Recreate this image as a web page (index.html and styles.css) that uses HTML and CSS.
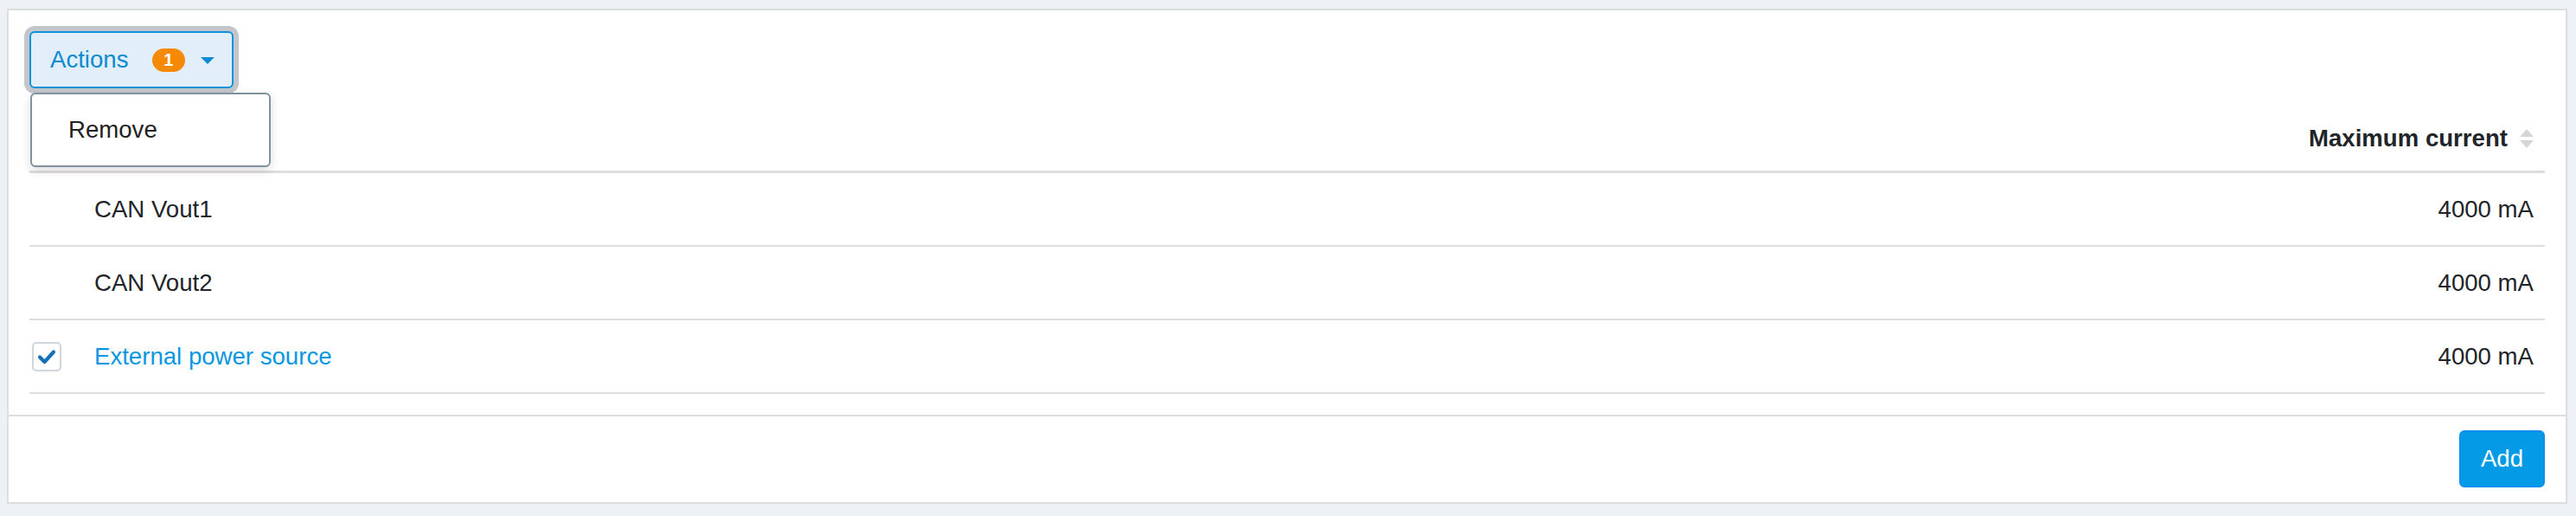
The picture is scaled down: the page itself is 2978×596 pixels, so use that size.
FILE: index.html
```html
<!DOCTYPE html>
<html>
<head>
<meta charset="utf-8">
<link rel="stylesheet" href="styles.css">
</head>
<body>
<div class="page">
  <div class="card">
    <div class="card-body">
      <div class="toolbar">
        <div class="dropdown">
          <button class="btn-actions">
            <span class="label">Actions</span>
            <span class="badge">1</span>
            <svg class="caret" width="16" height="8" viewBox="0 0 16 8"><path d="M0 0H16L8 8Z" fill="#0a8ad0"/></svg>
          </button>
          <div class="menu">
            <div class="menu-item">Remove</div>
          </div>
        </div>
      </div>
      <table class="grid">
        <thead>
          <tr>
            <th class="col-check"></th>
            <th class="col-name"></th>
            <th class="col-value">
              <span class="th-inner">Maximum current
                <svg class="sort" width="16" height="22" viewBox="0 0 16 22"><path d="M0 9H16L8 0Z" fill="#d6d6d6"/><path d="M0 13H16L8 22Z" fill="#d6d6d6"/></svg>
              </span>
            </th>
          </tr>
        </thead>
        <tbody>
          <tr>
            <td class="col-check"></td>
            <td class="col-name">CAN Vout1</td>
            <td class="col-value">4000 mA</td>
          </tr>
          <tr>
            <td class="col-check"></td>
            <td class="col-name">CAN Vout2</td>
            <td class="col-value">4000 mA</td>
          </tr>
          <tr>
            <td class="col-check">
              <span class="checkbox">
                <svg width="30" height="30" viewBox="0 0 30 30"><path d="M7 15.5L12.5 21L23 9.5" fill="none" stroke="#1470b8" stroke-width="4.2" stroke-linecap="round" stroke-linejoin="round"/></svg>
              </span>
            </td>
            <td class="col-name"><a class="link">External power source</a></td>
            <td class="col-value">4000 mA</td>
          </tr>
        </tbody>
      </table>
    </div>
    <div class="card-footer">
      <button class="btn-add">Add</button>
    </div>
  </div>
</div>
</body>
</html>
```

FILE: styles.css
```css
html, body {
  margin: 0;
  padding: 0;
  background: #edf1f5;
  font-family: "Liberation Sans", Arial, Helvetica, sans-serif;
  font-size: 27.6px;
  color: #212529;
}

.page {
  padding: 10px 10px 13px 8px;
}

.card {
  background: #ffffff;
  border: 2px solid #dcdfe2;
}

.card-body {
  padding: 24px 24px 24px 24px;
}

.toolbar {
  height: 66px;
  margin-bottom: 16px;
}

.dropdown {
  position: relative;
  display: inline-block;
}

.btn-actions {
  display: flex;
  align-items: center;
  box-sizing: border-box;
  width: 236px;
  height: 66px;
  padding: 0 20px 0 22px;
  background: #e2effa;
  border: 2px solid #0c93dc;
  border-radius: 6px;
  box-shadow: 0 0 0 6px #c3c7cb;
  font-family: inherit;
  font-size: 27.6px;
  color: #0a8ad0;
  cursor: pointer;
}

.btn-actions .label {
  line-height: 1;
}

.badge {
  display: inline-flex;
  align-items: center;
  justify-content: center;
  width: 39px;
  height: 27px;
  margin-left: 27px;
  border-radius: 14px;
  background: #f68a07;
  color: #ffffff;
  font-weight: bold;
  font-size: 20px;
}

.caret {
  margin-left: 18px;
  margin-top: 2px;
}

.menu {
  position: absolute;
  top: 71px;
  left: 1px;
  box-sizing: border-box;
  width: 278px;
  height: 86px;
  background: #ffffff;
  border: 2px solid #7f929e;
  border-radius: 6px;
  box-shadow: 0 4px 12px rgba(0, 0, 0, 0.14);
  display: flex;
  align-items: center;
  z-index: 5;
}

.menu-item {
  padding-left: 42px;
  color: #222;
}

.grid {
  width: 100%;
  border-collapse: collapse;
}

.grid th {
  height: 79px;
  border-bottom: 3px solid #dedede;
  font-weight: bold;
  padding: 0;
  vertical-align: middle;
}

.grid td {
  height: 83px;
  border-bottom: 2px solid #dedede;
  padding: 0;
  vertical-align: middle;
}

.col-check {
  width: 75px;
  padding-left: 3px !important;
  box-sizing: border-box;
}

.col-name {
  text-align: left;
}

.col-value {
  text-align: right;
  padding-right: 13px !important;
}

.th-inner {
  display: inline-flex;
  align-items: center;
  gap: 14px;
  padding-top: 4px;
}

.sort {
  display: block;
}

.checkbox {
  display: flex;
  align-items: center;
  justify-content: center;
  box-sizing: border-box;
  width: 34px;
  height: 34px;
  border: 2px solid #cfd6dd;
  border-radius: 5px;
  background: #ffffff;
}

.link {
  color: #0797e1;
  text-decoration: none;
}

.card-footer {
  border-top: 2px solid #dcdfe2;
  padding: 16px 24px 17px;
  display: flex;
  justify-content: flex-end;
}

.btn-add {
  height: 66px;
  padding: 0 23px;
  background: #049ae5;
  border: 2px solid #0a8ff0;
  border-radius: 6px;
  color: #ffffff;
  font-family: inherit;
  font-size: 27.6px;
  cursor: pointer;
}
```
